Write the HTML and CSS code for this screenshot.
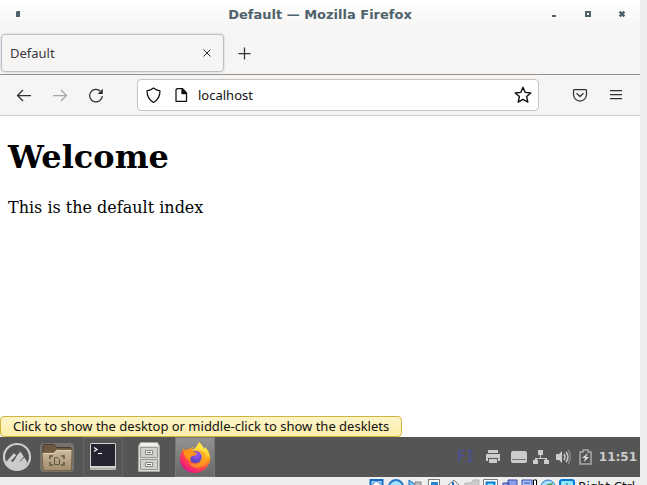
FILE: index.html
```html
<!DOCTYPE html>
<html lang="en">
<head>
<meta charset="utf-8">
<title>Default — Mozilla Firefox</title>
<link rel="stylesheet" href="styles.css">
</head>
<body>
<div class="screen">
  <header class="titlebar">
    <button class="wm-button" aria-label="Window menu"><svg width="16" height="16"><path d="M6 6l1-1h3v6H6z" fill="#4e626b"/></svg></button>
    <h2 class="window-title">Default — Mozilla Firefox</h2>
    <div class="wm-controls">
      <button class="wm-button" aria-label="Minimize"><svg width="16" height="16"><path d="M6 9h4v2H6z" fill="#4e626b"/></svg></button>
      <button class="wm-button" aria-label="Maximize"><svg width="16" height="16"><path d="M5 5h6v6H5zM7 7v2h2V7z" fill="#4e626b" fill-rule="evenodd"/></svg></button>
      <button class="wm-button" aria-label="Close"><svg width="16" height="16"><path d="M5.600 5.600l4.800 4.800M10.400 5.600l-4.800 4.800" stroke="#4e626b" stroke-width="2.500"/></svg></button>
    </div>
  </header>
  <nav class="tabs">
    <div class="tab"><span>Default</span>
      <button class="icon-button" aria-label="Close tab"><svg width="16" height="16" class="line thin"><path d="M4.500 4.500l7 7M11.500 4.500l-7 7"/></svg></button>
    </div>
    <button class="icon-button new-tab" aria-label="New tab"><svg width="16" height="16" class="line"><path d="M8.500 2.500v12M2.500 8.500h12"/></svg></button>
  </nav>
  <div class="toolbar">
    <div class="nav-buttons">
      <button class="icon-button" aria-label="Back"><svg width="16" height="16" class="line"><path d="M15 8.500H1.500M7 3L1.500 8.500 7 14"/></svg></button>
      <button class="icon-button" aria-label="Forward" disabled><svg width="16" height="16" class="line"><path d="M1 8.500h13.500M9 3l5.500 5.500L9 14"/></svg></button>
      <button class="icon-button" aria-label="Reload"><svg width="16" height="16" class="line"><path d="M12.300 4A6.300 6.300 0 1 0 14.300 9"/><path d="M14.800 1.800v5.200H9.600z" fill="#2b3236" stroke="none"/></svg></button>
    </div>
    <div class="address">
      <svg width="16" height="16" class="line dark"><path d="M7.500 1c2 1.600 4 2.400 6.500 2.800 0 5.200-2 9.200-6.500 11.700C3 13 1 9 1 3.800 3.500 3.400 5.500 2.600 7.500 1z"/></svg>
      <svg width="16" height="16" class="line dark page-icon"><path d="M3 1.700h5.500L12.500 6v8.300h-10.500V2.700z"/><path d="M8 1.700v4.800h4.500z" fill="#111"/></svg>
      <input type="text" value="localhost" aria-label="Address">
      <button class="icon-button" aria-label="Bookmark"><svg width="18" height="18" viewBox="0 0 16 16" class="line dark"><path d="M8 1.200l2 4.500 4.900.5-3.700 3.200 1.100 4.900L8 11.800l-4.300 2.500 1.100-4.900L1.100 6.200 6 5.700z"/></svg></button>
    </div>
    <div class="extras">
      <button class="icon-button" aria-label="Pocket"><svg width="16" height="16" class="line"><path d="M2.500 2.500h11q1 0 1 1V7.500a6.500 6.500 0 0 1-13 0V3.500q0-1 1-1zM4.500 6.200L8 9.500l3.500-3.300"/></svg></button>
      <button class="icon-button" aria-label="Menu"><svg width="16" height="16" class="line"><path d="M2 3.500h12M2 7.500h12M2 11.500h12"/></svg></button>
    </div>
  </div>
  <main class="page">
    <h1>Welcome</h1>
    <p>This is the default index</p>
    <div class="tooltip" role="tooltip">Click to show the desktop or middle-click to show the desklets</div>
  </main>
  <footer class="panel">
    <button class="launcher menu" aria-label="Menu"><svg width="30" height="30"><circle cx="15" cy="15" r="13" fill="none" stroke="#ccc" stroke-width="2.200"/><path d="M3.500 20.500L12 11l2.500 3 4-4.500 7 11A12 12 0 0 1 3.500 20.500z" fill="#ccc"/><path d="M14.500 13.500l-5 5.500 1.500.5zM22 15l-4 4.500" fill="#555" stroke="#555"/></svg></button>
    <button class="launcher" aria-label="Show desktop"><svg width="36" height="34"><defs><linearGradient id="fold" x2="0" y2="1"><stop stop-color="#cdbda0"/><stop offset="1" stop-color="#a18c6d"/></linearGradient></defs><rect x="1" y="3" width="34" height="29" rx="4" fill="#8c8780" opacity=".6"/><path d="M4 5.500q0-1 1-1h10l3 3h13q1 0 1 1V15H4z" fill="#6f5841" stroke="#493a2b"/><path d="M4.500 12.500h10l3-3H32q1 0 1 1l-.5 18q0 2-2 2H6q-2 0-2-2l-1-14q0-2 1.500-2z" fill="url(#fold)" stroke="#7d6444"/><path d="M5 13.500h10l3-3h14" stroke="#ddd0b9" fill="none"/><path d="M11 19v-3h3M22 16h3v3M25 22v3h-3M14 25h-3v-3" fill="none" stroke="#665442" stroke-width="1.500"/><path d="M15.500 17.500h3l2 2v5h-5z" fill="none" stroke="#665442"/></svg></button>
    <button class="launcher window" aria-label="Terminal"><svg width="28" height="30"><rect x="1" y="1" width="26" height="27" rx="1.500" fill="#d2d2ce"/><rect x="2" y="2" width="24" height="22" fill="#282331"/><path d="M1 26h26v1.500H1z" fill="#aaa9a5"/><path d="M5 5.500l3 2-3 2M9 11.500h4" fill="none" stroke="#fff" stroke-width="1.200"/></svg></button>
    <button class="launcher files" aria-label="Files"><svg width="24" height="32"><path d="M3.500 1.500h17l2 3.500v25.500h-21V5z" fill="#d7d8d3" stroke="#aaaba6"/><path d="M4 2h16l1 3H3z" fill="#f0f0ed"/><path d="M3.500 6.500h17v10h-17zM3.500 18.500h17v10h-17z" fill="#cfd1cc" stroke="#999c95"/><path d="M8.500 9.500h7v4h-7zM8.500 21.500h7v4h-7z" fill="#f1f1ee" stroke="#858780"/><path d="M10 11.500h4M10 23.500h4" stroke="#666"/></svg></button>
    <button class="launcher window active" aria-label="Firefox"><svg width="32" height="32"><defs><radialGradient id="fire" cx=".8" cy=".1" r="1"><stop stop-color="#fff34f"/><stop offset=".35" stop-color="#ffcf2f"/><stop offset=".55" stop-color="#ff8a18"/><stop offset=".78" stop-color="#ff4050"/><stop offset="1" stop-color="#e31587"/></radialGradient><radialGradient id="globe" cx=".6" cy=".3" r=".7"><stop stop-color="#9b58fa"/><stop offset="1" stop-color="#5141b2"/></radialGradient></defs><path d="M20 1c2 2 4 4 5 7l1-2c4 4 6 9 5 14C29 27 23 32 16 32 8 32 1 26 1 18c0-5 2-8 4-11v3c2-2 4-2 6-2l3-3-1 4c3-1 5-4 7-8z" fill="url(#fire)"/><circle cx="16.500" cy="16" r="6.200" fill="url(#globe)"/><path d="M4 7c1 2 3 3 6 2l4-3-1 4 5 2c0 2-3 3-5 3-2 1-2 3-1 5-4-1-8-6-8-13z" fill="#ff9419"/><path d="M17 10c6 0 8 6 5 10-3 5-9 4-12 1 2 8 17 8 18-3 0-4-2-8-8-9z" fill="#ffa01c" opacity=".7"/></svg></button>
    <div class="tray">
      <button class="layout" aria-label="Keyboard layout FI">FI</button>
      <button aria-label="Printers"><svg width="16" height="16"><path d="M3 1h10v3H3zM1 5h14v7h-2V9H3v3H1zM4 10h8v4H4z" fill="#ccc"/></svg></button>
      <button class="drive" aria-label="Drives"><svg width="16" height="16"><path d="M2 2h12q2 0 2 2v8q0 2-2 2H2q-2 0-2-2V4q0-2 2-2z" fill="#ccc"/><path d="M1 10.500h14" stroke="#777"/></svg></button>
      <button aria-label="Network"><svg width="16" height="16"><path d="M5 1h5v5H8v3h6v2h2v4h-5v-4h1v-1H4v1h1v4H0v-4h2V9h5V6H5z" fill="#ccc"/></svg></button>
      <button aria-label="Volume"><svg width="16" height="16"><path d="M1 5h3l3-3v12l-3-3H1z" fill="#ccc"/><path d="M9 5q2 3 0 6M11 3q4 5 0 10" fill="none" stroke="#ccc" stroke-width="1.500"/><path d="M13 1q5 7 0 14" fill="none" stroke="#858585" stroke-width="1.500"/></svg></button>
      <button aria-label="Battery"><svg width="16" height="16"><path d="M6 1h5v2h3v12H3V3h3z" fill="none" stroke="#aaa" stroke-width="1.500"/><path d="M11 4L5 9h3l-1 4 5-5H9z" fill="#ddd"/></svg></button>
      <time>11:51</time>
    </div>
  </footer>
</div>
<div class="host-status">
  <svg width="16" height="14"><path d="M1.500 1h12v12h-12z" fill="#a5ddff" stroke="#176bc2" stroke-width="2"/><circle cx="7.500" cy="6.500" r="4" fill="#fff" stroke="#4389c9"/></svg>
  <svg width="16" height="14"><circle cx="8" cy="8" r="7" fill="#9ee3ff" stroke="#2476c6" stroke-width="2"/></svg>
  <svg width="16" height="14"><path d="M2 1l8 6-8 6z" fill="#75c6ff" stroke="#176bc2"/><path d="M8 3h6v10H8z" fill="#bbb" stroke="#888"/></svg>
  <svg width="16" height="14"><path d="M2.500.500h11v12h-11z" fill="#fff" stroke="#777"/><path d="M5 3h7v9H5z" fill="#2186d3"/></svg>
  <svg width="16" height="14"><path d="M1 8l8-7 5 5-7 7z" fill="#eee" stroke="#777"/><path d="M8 3v5" stroke="#1e75c5" stroke-width="2"/></svg>
  <svg width="16" height="14"><path d="M1 4h6l2-3h6v12H1z" fill="#ccc" stroke="#bbb"/></svg>
  <svg width="16" height="14"><path d="M.500.500h14v12H.500z" fill="#fff" stroke="#777"/><path d="M3.500 3.500h8v7h-8z" fill="#8ee6ff" stroke="#0879d3" stroke-width="2"/></svg>
  <svg width="16" height="14"><path d="M6 1h9v8H6zM1 4h6v8H1z" fill="#8a9eea" stroke="#3549a4"/></svg>
  <svg width="16" height="14"><path d="M1 1h10v10H1z" fill="#a9c2ff" stroke="#3549a4"/><path d="M3 4h6M4 6v5" stroke="#3549a4"/><path d="M12.500 1h3v12h-3z" fill="#fff" stroke="#000"/></svg>
  <svg width="16" height="14"><circle cx="8" cy="8" r="7" fill="#a6ddff" stroke="#247bc6"/><path d="M3 8l5 5 5-9-5 1z" fill="#3f9f42"/></svg>
  <svg width="16" height="14"><rect x="1" y="1" width="14" height="13" rx="2" fill="#8de5ff" stroke="#0879d3" stroke-width="2"/><path d="M8 4v8M5 8l3 3 3-3" stroke="#176b8d" fill="none"/></svg>
  <span>Right Ctrl</span>
</div>
</body>
</html>
```
FILE: styles.css
```css
* { box-sizing: border-box; }
body {
  margin: 0;
  height: 100vh;
  display: flex;
  flex-direction: column;
  overflow: hidden;
  background: #eee;
  font-family: "DejaVu Sans", sans-serif;
  font-size: 12px;
}
button {
  padding: 0;
  border: 0;
  background: none;
  font: inherit;
  color: inherit;
}
svg { display: block; flex: none; }
.screen {
  flex: 1;
  min-height: 0;
  margin-right: 7px;
  display: flex;
  flex-direction: column;
  background: #f6f5f4;
}
.titlebar {
  display: grid;
  grid-template-columns: 1fr auto 1fr;
  align-items: center;
  height: 28px;
  padding: 0 10px;
  background: linear-gradient(#fff, #f6f5f4);
}
.wm-button { width: 16px; height: 16px; }
.window-title {
  margin: 0;
  font-size: 13px;
  color: #4e626b;
}
.wm-controls { display: flex; justify-content: flex-end; gap: 18px; }
.tabs {
  display: flex;
  align-items: center;
  gap: 12px;
  height: 47px;
  padding: 4px 1px 0;
  border-bottom: 1px solid #929292;
}
.tab {
  display: flex;
  justify-content: space-between;
  align-items: center;
  width: 223px;
  height: 38px;
  padding: 0 8px;
  border: 1px solid #bdbdc7;
  border-radius: 4px;
  box-shadow: 0 0 2px #bbbbc5;
  color: #38383d;
  font: 13px "Noto Sans", sans-serif;
}
.line { fill: none; stroke: #2b3236; stroke-width: 1.25px; stroke-linejoin: round; }
.thin { stroke-width: 1px; }
.dark { stroke: #111; }
.icon-button:disabled { opacity: .4; }
.toolbar {
  display: flex;
  align-items: center;
  height: 41px;
  padding: 0 16px;
  border-bottom: 1px solid #ccc9c6;
}
.nav-buttons { display: flex; gap: 20px; width: 121px; }
.address {
  flex: 1;
  display: flex;
  align-items: center;
  height: 32px;
  padding: 0 6px 0 8px;
  border: 1px solid #c8c3bf;
  border-radius: 4px;
  background: #fff;
}
.page-icon { margin-left: 12px; }
.address input {
  flex: 1;
  min-width: 0;
  margin-left: 8px;
  padding: 0;
  border: 0;
  outline: 0;
  background: none;
  font: 13px "Noto Sans", sans-serif;
  color: #111;
}
.extras { display: flex; gap: 20px; margin-left: 33px; }
.page {
  position: relative;
  flex: 1;
  min-height: 0;
  padding: 0 8px;
  background: #fff;
  color: #000;
  font: 16px "DejaVu Serif", serif;
}
h1 { margin: 22px 0; font-size: 32px; line-height: 38px; }
p { margin: 0; line-height: 20px; }
.tooltip {
  position: absolute;
  left: 0;
  bottom: 0;
  padding: 0 12px;
  border: 1px solid #d0b43c;
  border-radius: 4px;
  background: linear-gradient(#fdf5c8, #fcedaa);
  color: #111;
  font: 13px/19px "Noto Sans", sans-serif;
  white-space: nowrap;
}
.panel {
  display: flex;
  height: 40px;
  background: #555;
}
.launcher {
  display: flex;
  align-items: center;
  justify-content: center;
  width: 46px;
}
.menu { width: 34px; }
.files { width: 52px; }
.window { width: 40px; border: 1px solid #666; }
.active { background: linear-gradient(#929292, #686868); border-color: #777; }
.launcher:not(.files) + .window { margin-left: 3px; }
.tray {
  display: flex;
  align-items: center;
  gap: 6px;
  margin-left: auto;
  padding-right: 3px;
  color: #ccc;
}
.layout { margin-right: 4px; color: #46509a; font: 15px "DejaVu Sans Mono", monospace; }
.drive { margin-left: 4px; }
time { font-weight: bold; }
.host-status {
  display: flex;
  justify-content: flex-end;
  gap: 3px;
  height: 8px;
  padding: 2px 12px 0 0;
  overflow: hidden;
}
.host-status span { line-height: 16px; color: #111; }
```
